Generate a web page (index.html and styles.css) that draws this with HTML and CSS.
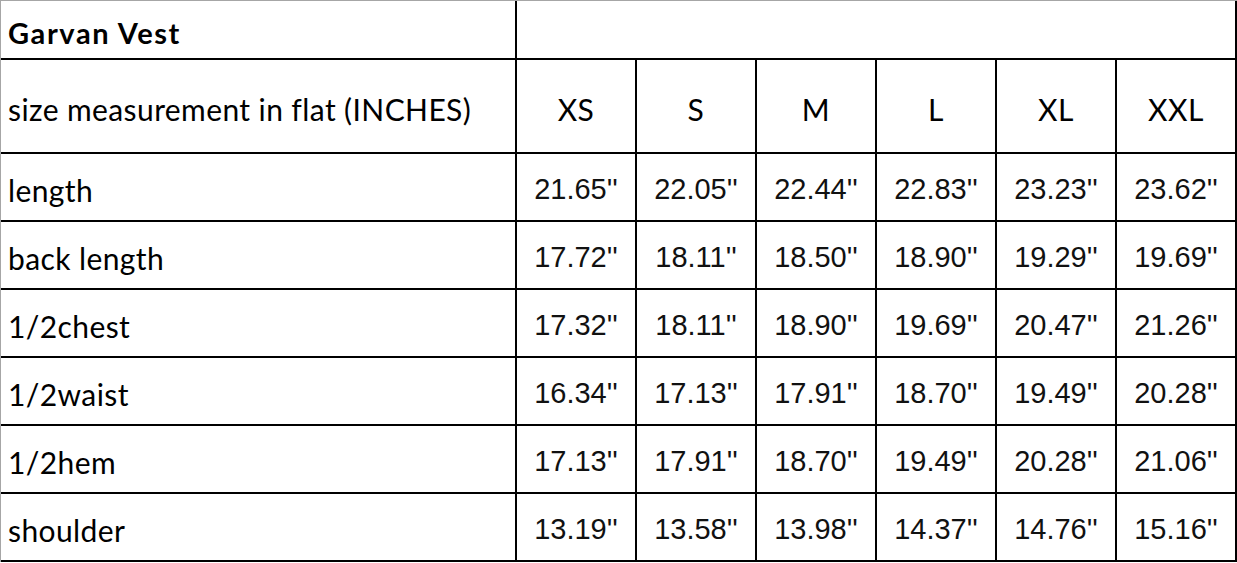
FILE: index.html
```html
<!DOCTYPE html>
<html>
<head>
<meta charset="utf-8">
<link rel="stylesheet" href="styles.css">
</head>
<body>
<table class="size-table">
  <colgroup>
    <col class="col-label">
    <col class="col-size"><col class="col-size"><col class="col-size">
    <col class="col-size"><col class="col-size"><col class="col-size">
  </colgroup>
  <tr class="row-title">
    <td class="label title">Garvan Vest</td>
    <td colspan="6"></td>
  </tr>
  <tr class="row-head">
    <td class="label">size measurement in flat (INCHES)</td>
    <td class="size">XS</td><td class="size">S</td><td class="size">M</td>
    <td class="size">L</td><td class="size">XL</td><td class="size">XXL</td>
  </tr>
  <tr class="row-data">
    <td class="label">length</td>
    <td class="num">21.65''</td><td class="num">22.05''</td><td class="num">22.44''</td>
    <td class="num">22.83''</td><td class="num">23.23''</td><td class="num">23.62''</td>
  </tr>
  <tr class="row-data">
    <td class="label">back length</td>
    <td class="num">17.72''</td><td class="num">18.11''</td><td class="num">18.50''</td>
    <td class="num">18.90''</td><td class="num">19.29''</td><td class="num">19.69''</td>
  </tr>
  <tr class="row-data">
    <td class="label">1/2chest</td>
    <td class="num">17.32''</td><td class="num">18.11''</td><td class="num">18.90''</td>
    <td class="num">19.69''</td><td class="num">20.47''</td><td class="num">21.26''</td>
  </tr>
  <tr class="row-data">
    <td class="label">1/2waist</td>
    <td class="num">16.34''</td><td class="num">17.13''</td><td class="num">17.91''</td>
    <td class="num">18.70''</td><td class="num">19.49''</td><td class="num">20.28''</td>
  </tr>
  <tr class="row-data">
    <td class="label">1/2hem</td>
    <td class="num">17.13''</td><td class="num">17.91''</td><td class="num">18.70''</td>
    <td class="num">19.49''</td><td class="num">20.28''</td><td class="num">21.06''</td>
  </tr>
  <tr class="row-data">
    <td class="label">shoulder</td>
    <td class="num">13.19''</td><td class="num">13.58''</td><td class="num">13.98''</td>
    <td class="num">14.37''</td><td class="num">14.76''</td><td class="num">15.16''</td>
  </tr>
</table>
</body>
</html>
```

FILE: styles.css
```css
html, body {
  margin: 0;
  padding: 0;
  background: #ffffff;
}

.size-table {
  border-collapse: separate;
  border-spacing: 0;
  table-layout: fixed;
  width: 1237px;
  border-left: 1px solid #a6a6a6;
  border-top: 1px solid #a6a6a6;
  color: #000000;
}

.col-label { width: 516px; }
.col-size { width: 120px; }

.size-table td {
  box-sizing: border-box;
  border-right: 2px solid #000000;
  border-bottom: 2px solid #000000;
  padding: 0;
  vertical-align: middle;
  white-space: nowrap;
  overflow: hidden;
}

.row-title td { height: 59px; }
.row-head td { height: 94px; }
.row-data td { height: 68px; }

.label {
  font-family: Lato, "Noto Sans", sans-serif;
  font-weight: 400;
  font-size: 30px;
  letter-spacing: 0.4px;
  padding-left: 7px !important;
  text-align: left;
  padding-top: 5px !important;
}

.title {
  font-weight: bold;
  font-size: 29px;
  letter-spacing: 1.6px;
}

.size {
  font-family: Lato, "Noto Sans", sans-serif;
  font-weight: 400;
  font-size: 30px;
  letter-spacing: 0.5px;
  text-align: center;
  padding-top: 5px !important;
}

.num {
  font-family: "Liberation Sans", Arial, sans-serif;
  font-size: 29px;
  text-align: center;
  padding-top: 4px !important;
  color: #111111;
}
```
